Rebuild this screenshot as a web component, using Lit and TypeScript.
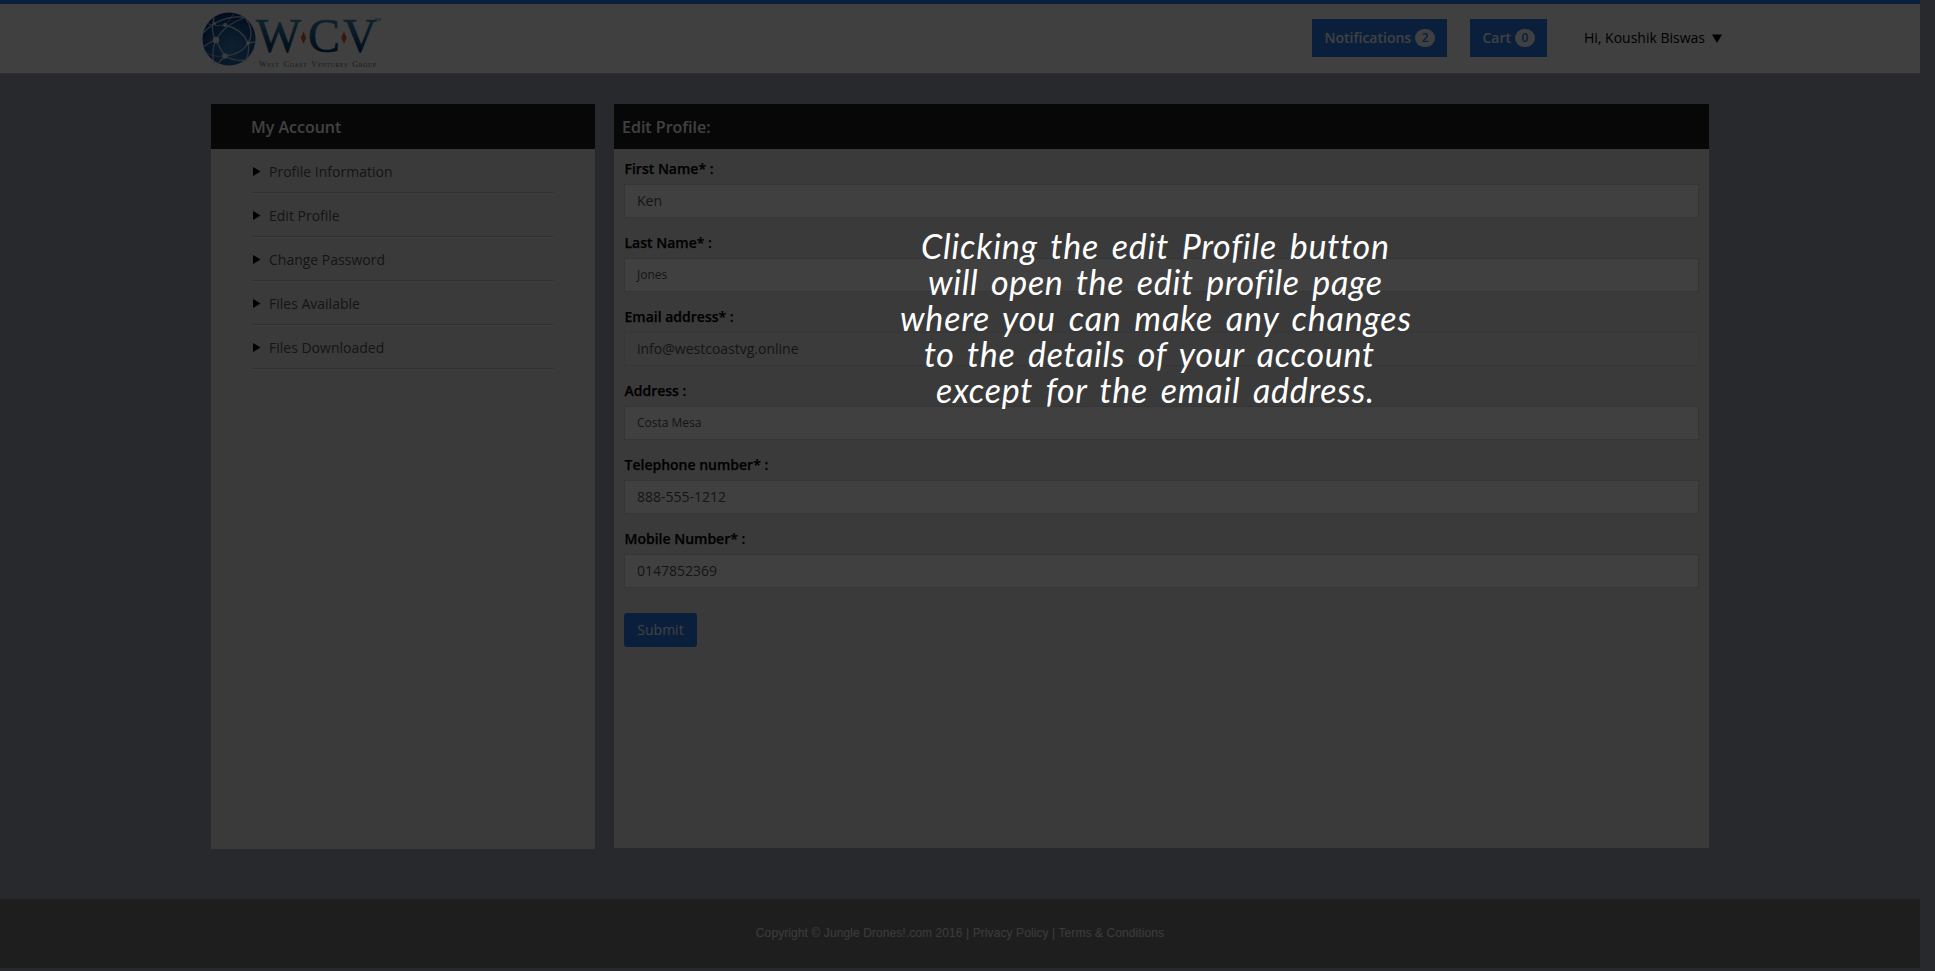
import { LitElement, html, svg, css } from "lit";
import { customElement } from "lit/decorators.js";

interface Field {
  label: string;
  value: string;
  small?: boolean;
  disabled?: boolean;
}

const MENU = ["Profile Information", "Edit Profile", "Change Password", "Files Available", "Files Downloaded"];

const FIELDS: Field[] = [
  { label: "First Name* :", value: "Ken" },
  { label: "Last Name* :", value: "Jones", small: true },
  { label: "Email address* :", value: "info@westcoastvg.online", disabled: true },
  { label: "Address :", value: "Costa Mesa", small: true },
  { label: "Telephone number* :", value: "888-555-1212" },
  { label: "Mobile Number* :", value: "0147852369" },
];

// text, start x, baseline, width
const HINT: [string, number, number, number][] = [
  ["Clicking the edit Profile button", 21, 49, 468],
  ["will open the edit profile page", 28, 85, 454],
  ["where you can make any changes", 0, 121, 511],
  ["to the details of your account", 24, 157, 450],
  ["except for the email address.", 36, 193, 438],
];

@customElement("wcv-logo")
export class WcvLogo extends LitElement {
  static styles = css`
    :host { display: block; width: 190px; height: 60px; }
    svg { display: block; }
    .big { font: 48px "Liberation Serif", serif; }
    .tag { font: 8.2px "Liberation Serif", serif; font-variant: small-caps; fill: #6c7078; word-spacing: 2px; }
    .tm { font: 4px "Liberation Sans", sans-serif; fill: #1c4c78; }
  `;
  render() {
    return html`<svg width="190" height="60" viewBox="0 0 190 60">
      <defs>
        <radialGradient id="globe" cx="0.55" cy="0.66" r="0.66">
          <stop offset="0" stop-color="#3c84c0" />
          <stop offset="0.5" stop-color="#2060a0" />
          <stop offset="1" stop-color="#083070" />
        </radialGradient>
        <linearGradient id="ink" gradientUnits="userSpaceOnUse" x1="0" y1="10" x2="0" y2="43">
          <stop offset="0" stop-color="#3c8cae" />
          <stop offset="0.45" stop-color="#1c6490" />
          <stop offset="1" stop-color="#043868" />
        </linearGradient>
      </defs>
      <circle cx="29" cy="30" r="26.5" fill="url(#globe)" />
      <g fill="none" stroke="#b9cde2" stroke-linecap="round">
        <path stroke-width="1.300" d="M3 24 Q20 6 44 8 M16 31 Q24 16 44 9 M16 31 Q10 24 14 9 M16 31 Q8 34 3 38 M16 31 Q11 42 14 54 M16 31 Q20 40 25 47" />
        <path stroke-width="1.300" d="M25 47 Q42 45 48 34 Q55 24 46 10 M25 16 Q42 20 48 34 M25 47 Q20 52 18 55 M25 47 Q36 53 46 51 M48 34 L55 33 M48 34 Q50 42 46 51" />
        <path stroke-width="0.700" d="M8 15 Q16 18 25 16 Q30 12 34 4 M4 41 Q10 49 25 47" />
      </g>
      <g fill="#e4edf5">
        <circle cx="16" cy="31" r="3.300" />
        <circle cx="25" cy="47" r="2.700" />
        <circle cx="48" cy="34" r="2" />
        <circle cx="25" cy="16" r="1.900" />
        <circle cx="14.500" cy="14.500" r="1.500" />
      </g>
      <g class="big" fill="url(#ink)" stroke="url(#ink)" stroke-width="0.6">
        <text x="56" y="43" textLength="45" lengthAdjust="spacingAndGlyphs">W</text>
        <text x="108" y="43">C</text>
        <text x="143" y="43" textLength="34" lengthAdjust="spacingAndGlyphs">V</text>
      </g>
      <path d="M103.500 22.500l2.800 6.200-2.800 6.200-2.800-6.200z M144 22.500l2.800 6.200-2.800 6.200-2.800-6.200z" fill="#e4622c" />
      <text class="tm" x="175" y="12">TM</text>
      <text class="tag" x="59" y="57.500" textLength="117">West Coast Ventures Group</text>
    </svg>`;
  }
}

@customElement("app-root")
export class AppRoot extends LitElement {
  static styles = css`
    * { box-sizing: border-box; }
    :host {
      display: block; position: relative; width: 1935px; height: 971px; overflow: hidden;
      background: #a0a4b0; font-family: "Open Sans", sans-serif; font-size: 14px; color: #000;
    }
    .page { width: 1920px; height: 968px; display: flex; flex-direction: column; }
    .top {
      height: 74px; background: #fff; border-top: 4px solid #287cec; border-bottom: 1px solid #c4c4c8;
      display: flex; align-items: flex-start; padding-left: 200px;
    }
    .logo { margin-top: 5px; }
    .actions { display: flex; margin-left: 922px; padding-top: 15px; align-items: center; }
    .btn {
      height: 38px; display: flex; align-items: center; gap: 4px; padding: 0 12px 0 12.500px; background: #287cec;
      color: #fff; font-weight: 600; margin-right: 23px; white-space: nowrap;
    }
    .btn span:first-child, .user span { padding-bottom: 2px; }
    .notes { width: 135px; }
    .cart { width: 77px; margin-right: 37px; }
    .badge {
      height: 18px; width: 21px; border-radius: 9px; background: #fff; color: #287cec;
      font-size: 12px; line-height: 17px; text-align: center; font-weight: 600;
    }
    .user { display: flex; align-items: center; gap: 7px; white-space: nowrap; }
    .main { display: flex; gap: 19px; padding: 30px 211px 0; height: 775px; align-items: flex-start; }
    .panel { background: #e6e6e6; }
    .side { width: 384px; height: 745px; }
    .form { width: 1095px; height: 744px; }
    .title {
      height: 45px; line-height: 47px; background: #1c1c1c; color: #fff; font-weight: 600; font-size: 16px;
    }
    .side .title { padding-left: 40px; }
    .form .title { padding-left: 8px; }
    .menu { padding: 0 41px; }
    .item {
      height: 44px; display: flex; align-items: center; gap: 8px; padding: 2px 0 0 1px; color: #555;
      border-bottom: 1px solid #c0c0c0; box-shadow: 0 1px 0 #f6f6f6;
    }
    .fields { padding: 10px 10px 0; }
    .field { height: 74px; }
    .label { height: 25px; line-height: 20px; padding-left: 0.500px; font-weight: 600; -webkit-text-stroke: 0.25px #000; }
    .input {
      height: 34px; line-height: 31px; border: 1px solid #d2d2d2; background: #fff; color: #555;
      padding-left: 12px;
    }
    .input.small { font-size: 12px; line-height: 32px; }
    .input.disabled { background: #eaeaea; border-color: #dadada; }
    .submit {
      margin-top: 10px; width: 73px; height: 34px; border-radius: 3px; background: #287cec; color: #fff;
      text-align: center; line-height: 33px;
    }
    .foot {
      margin-top: 50px; height: 69px; background: #787a7e; color: #e8e8e8; text-align: center;
      font: 12px/68px "Liberation Sans", Arial, sans-serif;
    }
    .foot span { letter-spacing: 0.09px; }
    .shade { position: absolute; inset: 0; background: rgba(0, 0, 0, 0.75); }
    .hint { position: absolute; left: 900px; top: 210px; }
    .hint text {
      font: italic 400 34px "Lato", "Open Sans", cursive; fill: #fff; word-spacing: 4px;
      font-variant-ligatures: none;
    }
  `;

  render() {
    return html`
      <div class="page">
        <header class="top">
          <wcv-logo class="logo"></wcv-logo>
          <div class="actions">
            <div class="btn notes"><span>Notifications</span><span class="badge">2</span></div>
            <div class="btn cart"><span>Cart</span><span class="badge">0</span></div>
            <div class="user"><span>Hi, Koushik Biswas</span>
              <svg width="10" height="9"><path d="M0 0.500h10L5 9z" /></svg>
            </div>
          </div>
        </header>
        <main class="main">
          <nav class="panel side">
            <div class="title">My Account</div>
            <div class="menu">
              ${MENU.map(
                (m) => html`<div class="item"><svg width="8" height="9"><path d="M0 0l7.500 4.500L0 9z" /></svg><span>${m}</span></div>`
              )}
            </div>
          </nav>
          <section class="panel form">
            <div class="title">Edit Profile:</div>
            <div class="fields">
              ${FIELDS.map(
                (f) => html`<div class="field">
                  <div class="label">${f.label}</div>
                  <div class="input ${f.small ? "small" : ""} ${f.disabled ? "disabled" : ""}">${f.value}</div>
                </div>`
              )}
              <div class="submit">Submit</div>
            </div>
          </section>
        </main>
        <footer class="foot"><span>Copyright © Jungle Drones!.com 2016 | Privacy Policy | Terms &amp; Conditions</span></footer>
      </div>
      <div class="shade"></div>
      <svg class="hint" width="520" height="210">
        ${HINT.map(([t, x, y, w]) => svg`<text x=${x} y=${y} textLength=${w}>${t}</text>`)}
      </svg>
    `;
  }
}
